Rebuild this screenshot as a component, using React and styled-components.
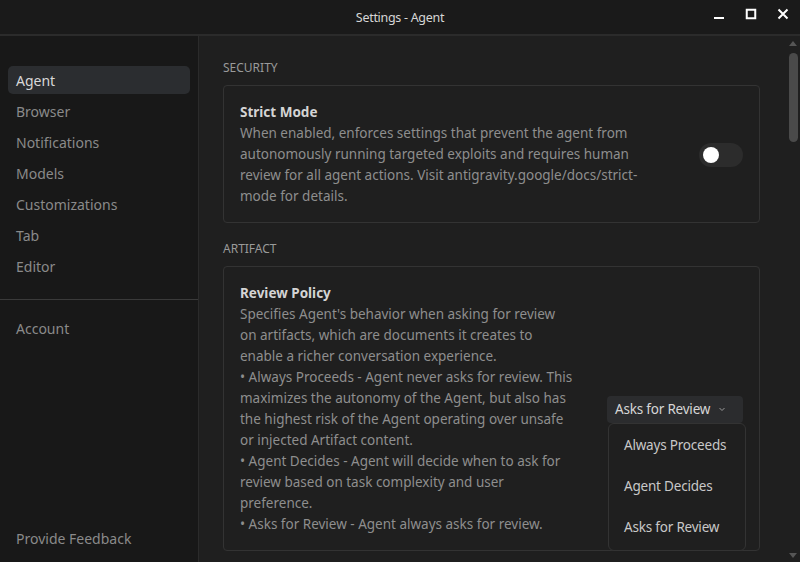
import styled, {createGlobalStyle} from 'styled-components';

const GlobalStyle = createGlobalStyle`
  html, body {
    margin: 0;
    padding: 0;
    background: #1f1f1f;
  }
  body {
    font-family: 'Noto Sans', 'Open Sans', sans-serif;
  }
`;

const navItems = ['Agent', 'Browser', 'Notifications', 'Models', 'Customizations', 'Tab', 'Editor'];

const policyLines = [
  "Specifies Agent's behavior when asking for review",
  'on artifacts, which are documents it creates to',
  'enable a richer conversation experience.',
  '• Always Proceeds - Agent never asks for review. This',
  'maximizes the autonomy of the Agent, but also has',
  'the highest risk of the Agent operating over unsafe',
  'or injected Artifact content.',
  '• Agent Decides - Agent will decide when to ask for',
  'review based on task complexity and user',
  'preference.',
  '• Asks for Review - Agent always asks for review.',
];

const strictLines = [
  'When enabled, enforces settings that prevent the agent from',
  'autonomously running targeted exploits and requires human',
  'review for all agent actions. Visit antigravity.google/docs/strict-',
  'mode for details.',
];

export default function App() {
  return (
    <Window>
      <GlobalStyle />
      <TitleBar>
        <Title>Settings - Agent</Title>
        <Controls>
          <svg width="12" height="12" viewBox="0 0 12 12">
            <rect x="1" y="9" width="10" height="2" fill="#fff" />
          </svg>
          <svg width="12" height="12" viewBox="0 0 12 12">
            <rect x="1.75" y="1.75" width="8.5" height="8.5" fill="none" stroke="#fff" strokeWidth="2" />
          </svg>
          <svg width="12" height="12" viewBox="0 0 12 12">
            <path d="M1.5 1.5 L10.5 10.5 M10.5 1.5 L1.5 10.5" stroke="#fff" strokeWidth="2" />
          </svg>
        </Controls>
      </TitleBar>
      <Body>
        <Sidebar>
          <NavList>
            {navItems.map((n, i) => (
              <NavItem key={n} $active={i === 0}>
                {n}
              </NavItem>
            ))}
          </NavList>
          <Divider />
          <NavList>
            <NavItem>Account</NavItem>
          </NavList>
          <Spacer />
          <NavList>
            <NavItem>Provide Feedback</NavItem>
          </NavList>
        </Sidebar>
        <Main>
          <Content>
            <SectionLabel>SECURITY</SectionLabel>
            <Card>
              <Text>
                <SettingTitle>Strict Mode</SettingTitle>
                {strictLines.map((l) => (
                  <Line key={l}>{l}</Line>
                ))}
              </Text>
              <Toggle>
                <Knob />
              </Toggle>
            </Card>
            <SectionLabel>ARTIFACT</SectionLabel>
            <Card $last>
              <Text>
                <SettingTitle>Review Policy</SettingTitle>
                {policyLines.map((l) => (
                  <Line key={l}>{l}</Line>
                ))}
              </Text>
              <SelectWrap>
                <SelectButton>
                  Asks for Review
                  <svg width="10" height="10" viewBox="0 0 10 10">
                    <path d="M2.5 4 L5 6.5 L7.5 4" fill="none" stroke="#9a9a9a" strokeWidth="1" />
                  </svg>
                </SelectButton>
                <Menu>
                  <MenuItem>Always Proceeds</MenuItem>
                  <MenuItem>Agent Decides</MenuItem>
                  <MenuItem>Asks for Review</MenuItem>
                </Menu>
              </SelectWrap>
            </Card>
          </Content>
          <ScrollBar>
            <Arrow />
            <Thumb />
            <Grow />
            <Arrow $down />
          </ScrollBar>
        </Main>
      </Body>
    </Window>
  );
}

const Window = styled.div`
  width: 800px;
  height: 562px;
  display: flex;
  flex-direction: column;
  overflow: hidden;
  background: #1f1f1f;
`;

const TitleBar = styled.div`
  height: 34px;
  flex: none;
  background: #1a1a1a;
  border-bottom: 2px solid #2b2b2b;
  position: relative;
  display: flex;
  align-items: center;
  justify-content: center;
`;

const Title = styled.div`
  color: #d6d6d6;
  font-size: 12.5px;
  letter-spacing: -0.3px;
`;

const Controls = styled.div`
  position: absolute;
  right: 11px;
  top: 8px;
  display: flex;
  gap: 20px;
  svg {
    display: block;
  }
`;

const Body = styled.div`
  flex: 1;
  display: flex;
  min-height: 0;
`;

const Sidebar = styled.div`
  width: 199px;
  flex: none;
  background: #181818;
  border-right: 1px solid #2b2b2b;
  display: flex;
  flex-direction: column;
  padding: 30px 0 10px;
  box-sizing: border-box;
`;

const NavList = styled.div`
  display: flex;
  flex-direction: column;
  gap: 3px;
  padding: 0 8px;
`;

const NavItem = styled.div`
  height: 28px;
  display: flex;
  align-items: center;
  padding: 0 8px;
  border-radius: 5px;
  font-size: 14px;
  color: ${(p) => (p.$active ? '#d8d8d8' : '#8a8a8a')};
  background: ${(p) => (p.$active ? '#2b2d30' : 'transparent')};
`;

const Divider = styled.div`
  height: 1px;
  background: #3a3a3a;
  margin: 19px 0 14px;
`;

const Spacer = styled.div`
  flex: 1;
`;

const Main = styled.div`
  flex: 1;
  display: flex;
  min-width: 0;
`;

const Content = styled.div`
  flex: 1;
  padding: 23px 26px 0 24px;
  display: flex;
  flex-direction: column;
`;

const SectionLabel = styled.div`
  font-size: 12px;
  color: #9a9a9a;
  height: 18px;
  line-height: 18px;
  margin-bottom: 8px;
`;

const Card = styled.div`
  border: 1px solid #333;
  border-radius: 4px;
  padding: 16px 16px 15px;
  margin-bottom: ${(p) => (p.$last ? '0' : '17px')};
  display: flex;
  align-items: center;
  justify-content: space-between;
  background: #1f1f1f;
`;

const Text = styled.div`
  display: flex;
  flex-direction: column;
  font-size: 13.5px;
  line-height: 21px;
`;

const SettingTitle = styled.div`
  font-weight: 700;
  color: #d4d4d4;
`;

const Line = styled.div`
  color: #8e8e8e;
  white-space: nowrap;
`;

const Toggle = styled.div`
  width: 44px;
  height: 24px;
  border-radius: 12px;
  background: #2c2c2c;
  position: relative;
  flex: none;
`;

const Knob = styled.div`
  position: absolute;
  left: 4px;
  top: 4px;
  width: 16px;
  height: 16px;
  border-radius: 50%;
  background: #fff;
`;

const SelectWrap = styled.div`
  position: relative;
  flex: none;
`;

const SelectButton = styled.div`
  width: 136px;
  box-sizing: border-box;
  height: 27px;
  display: flex;
  align-items: center;
  gap: 7px;
  padding: 0 8px;
  border-radius: 4px;
  background: #2b2c2e;
  color: #d6d6d6;
  font-size: 13.5px;
  letter-spacing: -0.2px;
`;

const Menu = styled.div`
  position: absolute;
  top: 27px;
  left: 1px;
  width: 138px;
  box-sizing: border-box;
  background: #1f1f1f;
  border: 1px solid #333;
  border-radius: 6px;
  padding: 1px 0 2px;
  z-index: 2;
`;

const MenuItem = styled.div`
  height: 41px;
  display: flex;
  align-items: center;
  padding-left: 15px;
  font-size: 13.5px;
  letter-spacing: -0.2px;
  color: #c8c8c8;
`;

const ScrollBar = styled.div`
  width: 14px;
  flex: none;
  display: flex;
  flex-direction: column;
  align-items: center;
  padding: 5px 0 4px;
  box-sizing: border-box;
`;

const Arrow = styled.div`
  width: 0;
  height: 0;
  border-left: 4px solid transparent;
  border-right: 4px solid transparent;
  ${(p) =>
    p.$down ? 'border-top: 5px solid #555;' : 'border-bottom: 5px solid #555;'}
`;

const Thumb = styled.div`
  width: 9px;
  height: 89px;
  border-radius: 5px;
  background: #4a4a4a;
  margin-top: 7px;
`;

const Grow = styled.div`
  flex: 1;
`;
